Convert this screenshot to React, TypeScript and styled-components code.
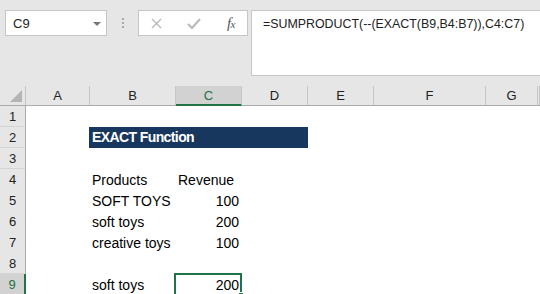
import styled, { createGlobalStyle } from "styled-components";

const GlobalStyle = createGlobalStyle`
  html, body {
    margin: 0;
    padding: 0;
    background: #ffffff;
    overflow: hidden;
  }
  * {
    box-sizing: border-box;
  }
`;

const COLS = "26px 64px 86px 66px 66px 66px 112px 52px 1fr";
const GREEN = "#217346";

const columns = ["A", "B", "C", "D", "E", "F", "G", ""];

const rows: { b?: string; c?: string; title?: boolean }[] = [
  {},
  { title: true, b: "EXACT Function" },
  {},
  { b: "Products", c: "Revenue" },
  { b: "SOFT TOYS", c: "100" },
  { b: "soft toys", c: "200" },
  { b: "creative toys", c: "100" },
  {},
  { b: "soft toys", c: "200" },
];

const App = () => {
  return (
    <Sheet>
      <GlobalStyle />
      <TopBar>
        <NameBox>
          <span>C9</span>
          <DropArrow />
        </NameBox>
        <Grip>
          <i />
          <i />
          <i />
        </Grip>
        <FxBox>
          <IconSlot>
            <svg width="11" height="11" viewBox="0 0 11 11">
              <path d="M1 1 L10 10 M10 1 L1 10" stroke="#b8b8b8" strokeWidth="1.4" fill="none" />
            </svg>
          </IconSlot>
          <IconSlot>
            <svg width="14" height="11" viewBox="0 0 14 11">
              <path d="M1 6 L5 10 L13 1" stroke="#b8b8b8" strokeWidth="2" fill="none" />
            </svg>
          </IconSlot>
          <FxLabel>
            f<small>x</small>
          </FxLabel>
        </FxBox>
        <FormulaBar>=SUMPRODUCT(--(EXACT(B9,B4:B7)),C4:C7)</FormulaBar>
      </TopBar>

      <HeaderRow>
        <Corner>
          <Triangle />
        </Corner>
        {columns.map((col, i) => (
          <ColHead key={i} $active={col === "C"}>
            {col}
          </ColHead>
        ))}
      </HeaderRow>

      {rows.map((row, i) => {
        const n = i + 1;
        const selected = n === 9;
        return (
          <GridRow key={n}>
            <RowHead $active={selected}>{n}</RowHead>
            <Cell />
            {row.title ? (
              <TitleCell>{row.b}</TitleCell>
            ) : (
              <>
                <Cell>{row.b}</Cell>
                <Cell $align={n === 4 ? "left" : "right"}>
                  {row.c}
                  {selected && (
                    <Selection>
                      <FillHandle />
                    </Selection>
                  )}
                </Cell>
                <Cell />
              </>
            )}
            <Cell />
            <Cell />
            <Cell />
            <Cell />
          </GridRow>
        );
      })}
    </Sheet>
  );
};

const Sheet = styled.div`
  width: 540px;
  height: 294px;
  overflow: hidden;
  background: #ffffff;
  font-family: "Liberation Sans", Arial, sans-serif;
  color: #000000;
`;

const TopBar = styled.div`
  height: 86px;
  background: #e6e6e6;
  display: flex;
  align-items: flex-start;
  padding: 10px 0 0 5px;
`;

const NameBox = styled.div`
  width: 102px;
  height: 26px;
  background: #ffffff;
  border: 1px solid #c6c6c6;
  display: flex;
  align-items: center;
  justify-content: space-between;
  padding: 0 5px 0 7px;
  font-size: 13px;
  color: #222222;
`;

const DropArrow = styled.span`
  width: 0;
  height: 0;
  border-left: 4px solid transparent;
  border-right: 4px solid transparent;
  border-top: 4px solid #777777;
  margin-top: 1px;
`;

const Grip = styled.div`
  width: 31px;
  height: 26px;
  display: flex;
  flex-direction: column;
  align-items: center;
  justify-content: center;
  gap: 2px;

  i {
    display: block;
    width: 2px;
    height: 2px;
    background: #a8a8a8;
  }
`;

const FxBox = styled.div`
  width: 110px;
  height: 26px;
  background: #ffffff;
  border: 1px solid #c6c6c6;
  display: flex;
  align-items: center;
  padding: 0 12px 0 12px;
  justify-content: space-between;
`;

const IconSlot = styled.span`
  display: flex;
  align-items: center;
`;

const FxLabel = styled.span`
  font-family: "Liberation Serif", "Times New Roman", serif;
  font-style: italic;
  font-size: 15px;
  color: #555555;
  letter-spacing: -0.5px;

  small {
    font-size: 11px;
  }
`;

const FormulaBar = styled.div`
  flex: 1;
  margin-left: 3px;
  height: 66px;
  background: #ffffff;
  border: 1px solid #c6c6c6;
  border-right: none;
  padding: 6px 0 0 11px;
  font-size: 12.4px;
  color: #222222;
  white-space: nowrap;
`;

const HeaderRow = styled.div`
  display: grid;
  grid-template-columns: ${COLS};
  height: 20px;
  background: #e6e6e6;
  border-bottom: 1px solid #ababab;
`;

const Corner = styled.div`
  position: relative;
  border-right: 1px solid #c6c6c6;
`;

const Triangle = styled.span`
  position: absolute;
  right: 3px;
  bottom: 3px;
  width: 0;
  height: 0;
  border-left: 12px solid transparent;
  border-bottom: 12px solid #b4b4b4;
`;

const ColHead = styled.div<{ $active?: boolean }>`
  display: flex;
  align-items: center;
  justify-content: center;
  font-size: 13px;
  color: ${({ $active }) => ($active ? GREEN : "#222222")};
  background: ${({ $active }) => ($active ? "#d2d2d2" : "transparent")};
  border-right: 1px solid #c6c6c6;
  border-bottom: ${({ $active }) => ($active ? `2px solid ${GREEN}` : "none")};
  margin-bottom: ${({ $active }) => ($active ? "-1px" : "0")};
`;

const GridRow = styled.div`
  display: grid;
  grid-template-columns: ${COLS};
  height: 21px;
`;

const RowHead = styled.div<{ $active?: boolean }>`
  display: flex;
  align-items: center;
  justify-content: center;
  font-size: 13px;
  background: ${({ $active }) => ($active ? "#d2d2d2" : "#e6e6e6")};
  color: ${({ $active }) => ($active ? GREEN : "#222222")};
  border-right: ${({ $active }) => ($active ? `2px solid ${GREEN}` : "1px solid #ababab")};
  border-bottom: 1px solid #d4d4d4;
`;

const Cell = styled.div<{ $align?: "left" | "right" }>`
  position: relative;
  font-size: 14px;
  line-height: 21px;
  padding: 1px 3px 0 2px;
  white-space: nowrap;
  text-align: ${({ $align }) => $align || "left"};
`;

const TitleCell = styled.div`
  grid-column: span 3;
  margin-left: -1px;
  background: #17375e;
  color: #ffffff;
  font-weight: bold;
  font-size: 14px;
  letter-spacing: -0.6px;
  line-height: 21px;
  padding: 0 3px;
  white-space: nowrap;
`;

const Selection = styled.span`
  position: absolute;
  left: -2px;
  top: -1px;
  width: 68px;
  height: 23px;
  border: 2px solid ${GREEN};
  pointer-events: none;
`;

const FillHandle = styled.span`
  position: absolute;
  right: -4px;
  bottom: -4px;
  width: 6px;
  height: 6px;
  background: ${GREEN};
  border: 1px solid #ffffff;
`;

export default App;
